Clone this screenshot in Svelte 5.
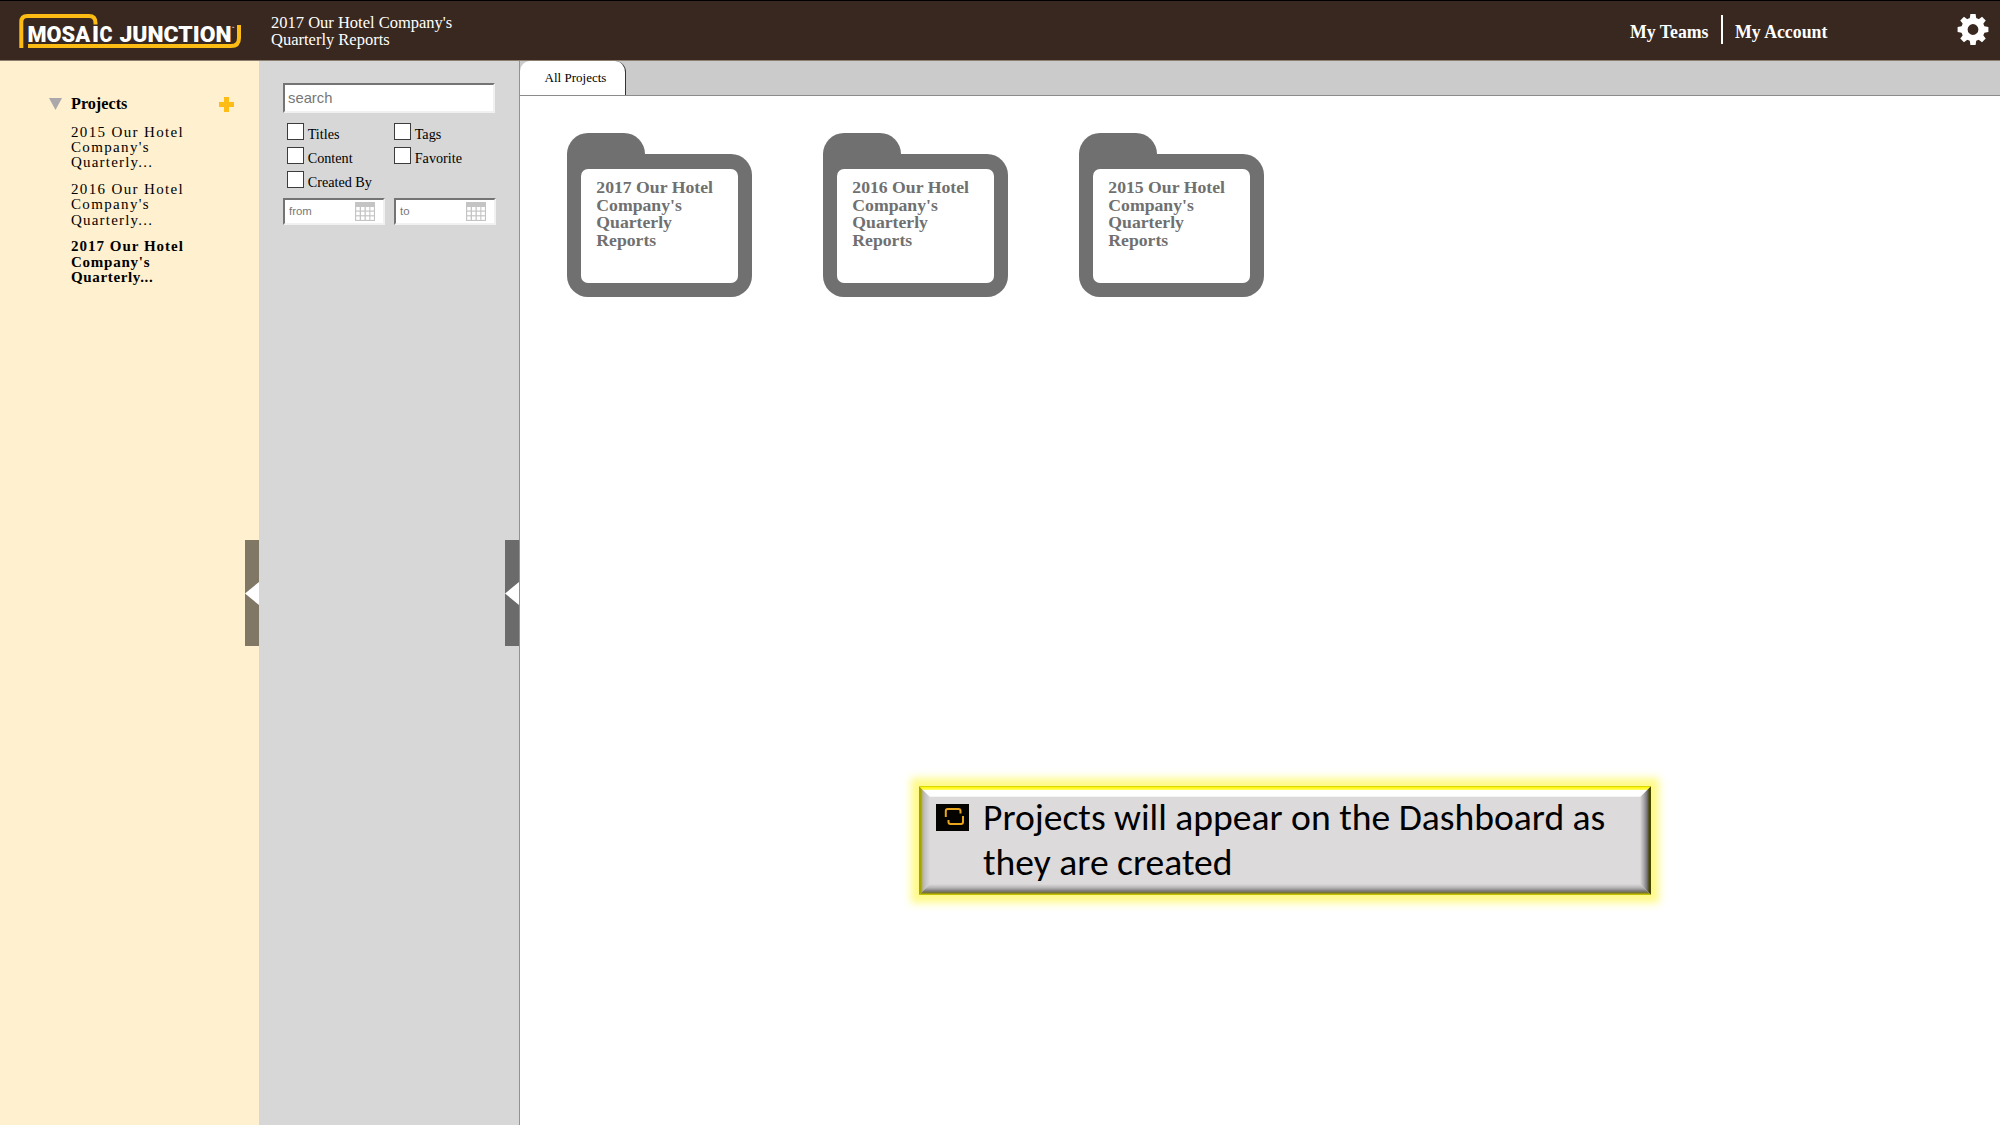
<script>
  const projects = [
    { lines: ['2015 Our Hotel', "Company's", 'Quarterly...'], current: false },
    { lines: ['2016 Our Hotel', "Company's", 'Quarterly...'], current: false },
    { lines: ['2017 Our Hotel', "Company's", 'Quarterly...'], current: true }
  ];
  const filters = ['Titles', 'Tags', 'Content', 'Favorite', 'Created By'];
  const dates = ['from', 'to'];
  const folders = [2017, 2016, 2015];
  const teeth = [0, 45, 90, 135, 180, 225, 270, 315];
</script>

<div class="app">
  <header>
    <svg class="logo" width="224" height="36" viewBox="0 0 224 36">
      <g fill="none" stroke="#fcbc14" stroke-width="4">
        <path d="M2.300 35V9Q2.300 3 8.300 3H70Q76.500 3 76.500 10V11.500" />
        <path d="M9 33H212Q220 33 220 25V12" />
      </g>
      <text x="8.500" y="28.700" textLength="62.500" lengthAdjust="spacingAndGlyphs">MOSA</text>
      <text x="73" y="28.700" textLength="7" lengthAdjust="spacingAndGlyphs">I</text>
      <text x="80.500" y="28.700" textLength="13" lengthAdjust="spacingAndGlyphs">C</text>
      <text x="100.500" y="28.700" textLength="112" lengthAdjust="spacingAndGlyphs">JUNCTION</text>
      <text class="tm" x="212.500" y="16.500">™</text>
    </svg>
    <div class="title">2017 Our Hotel Company's<br />Quarterly Reports</div>
    <nav>
      <a class="teams" href="#teams">My Teams</a>
      <span class="divider"></span>
      <a class="account" href="#account">My Account</a>
    </nav>
    <svg class="gear" width="32" height="32" viewBox="-16 -15.500 32 32">
      <g fill="#fff">
        {#each teeth as angle}
          <path d="M-3.400 -10L-2.600 -15.400H2.600L3.400 -10Z" transform="rotate({angle})" />
        {/each}
      </g>
      <circle r="8.600" fill="none" stroke="#fff" stroke-width="6.400" />
    </svg>
  </header>

  <main>
    <aside class="projects">
      <div class="tree">
        <div class="heading">
          <svg class="caret" width="13" height="12" viewBox="0 0 13 12"><path d="M0 0H13L6.500 12Z" fill="#aaa8ab" /></svg>
          <strong>Projects</strong>
          <svg class="plus" width="15" height="15" viewBox="0 0 15 15"><path d="M5 0H10V5H15V10H10V15H5V10H0V5H5Z" fill="#fdbd16" /></svg>
        </div>
        {#each projects as project}
          <div class="project" class:current={project.current}>
            {#each project.lines as line}<div>{line}</div>{/each}
          </div>
        {/each}
      </div>
      <div class="handle tan">
        <svg width="14" height="23" viewBox="0 0 14 23"><path d="M0 11.500L14 0V23Z" fill="#fff" /></svg>
      </div>
    </aside>

    <aside class="search">
      <div class="form">
        <div class="field query">search</div>
        <div class="checks">
          {#each filters as filter}
            <label><span class="box"></span><span class="name">{filter}</span></label>
          {/each}
        </div>
        <div class="dates">
          {#each dates as date}
            <div class="field date">
              <span>{date}</span>
              <svg width="20" height="19" viewBox="0 0 20 19">
                <path d="M0 0H20V19H0Z" fill="#c4c4c4" />
                <g fill="#fff">
                  {#each [5, 9.7, 14.4] as y}
                    {#each [1.2, 6, 10.8, 15.4] as x}
                      <rect {x} {y} width="3.500" height="3.500" />
                    {/each}
                  {/each}
                </g>
              </svg>
            </div>
          {/each}
        </div>
      </div>
      <div class="handle grey">
        <svg width="14" height="23" viewBox="0 0 14 23"><path d="M0 11.500L14 0V23Z" fill="#fff" /></svg>
      </div>
    </aside>

    <section class="board">
      <div class="tabs"><div class="tab">All Projects</div></div>
      <div class="folders">
        {#each folders as year}
          <div class="folder">
            <div class="ear"></div>
            <div class="body">
              <div class="label">{year} Our Hotel<br />Company's<br />Quarterly<br />Reports</div>
            </div>
          </div>
        {/each}
      </div>
    </section>
  </main>

  <div class="callout">
    <i class="bevel left"></i>
    <i class="bevel right"></i>
    <i class="bevel bottom"></i>
    <i class="bevel top"></i>
    <svg class="bullet" width="33" height="27" viewBox="0 0 33 27">
      <rect width="33" height="27" fill="#050300" />
      <g fill="none" stroke="#e9a51c" stroke-width="2">
        <path d="M9.800 13V7Q9.800 5 11.800 5H22.500Q24.500 5 24.500 7V9.500" />
        <path d="M12.500 16V18Q12.500 20 14.500 20H25Q27 20 27 18V12" />
      </g>
    </svg>
    <div class="message">
      <div>Projects will appear on the Dashboard as</div>
      <div>they are created</div>
    </div>
  </div>
</div>

<style>
  :global(body) { margin: 0; overflow: hidden; }
  .app {
    position: relative;
    width: 2000px;
    height: 1125px;
    display: flex;
    flex-direction: column;
    font-family: 'Liberation Serif', 'Times New Roman', serif;
    color: #000;
    background: #fff;
  }
  header {
    box-sizing: border-box;
    height: 61px;
    border-top: 1px solid #000;
    border-bottom: 1px solid #8d7f70;
    background: #38281f;
    color: #fff;
    display: flex;
    align-items: flex-start;
    padding: 0 11px 0 19px;
  }
  .logo { margin-top: 12px; flex: none; }
  .logo text { font: 900 22px Roboto, sans-serif; fill: #fff; }
  .logo .tm { font-size: 5px; font-weight: 400; }
  .title {
    margin: 13px 0 0 28px;
    font-size: 16.500px;
    line-height: 17px;
    white-space: nowrap;
  }
  nav {
    margin: 14px 129px 0 auto;
    display: flex;
    font-size: 17.800px;
    font-weight: bold;
    line-height: 34px;
    white-space: nowrap;
  }
  nav a { color: inherit; text-decoration: none; }
  .teams { width: 79px; }
  .account { width: 93px; }
  .divider { width: 2px; height: 29px; margin: 0 12px; background: #fff; }
  .gear { flex: none; margin-top: 13px; }
  main { flex: 1; display: flex; min-height: 0; }
  aside { display: flex; align-items: center; box-sizing: border-box; flex: none; }
  .projects { width: 259px; background: #fff0cf; }
  .search { width: 261px; background: #d7d7d7; border-right: 1px solid #929292; }
  .handle { flex: none; height: 106px; display: flex; align-items: center; width: 14px; }
  .handle svg { display: block; }
  .tan { background: #807864; }
  .grey { background: #6b6b6b; }
  .tree { flex: 1; align-self: flex-start; padding: 32px 11px 0 49px; }
  .heading {
    display: flex;
    align-items: center;
    height: 22px;
    font-size: 16.200px;
    line-height: 22px;
    margin-bottom: 9.700px;
  }
  .heading strong { margin-left: 9px; }
  .plus { margin-left: auto; }
  .project {
    padding-left: 22px;
    font-size: 15px;
    line-height: 15.300px;
    letter-spacing: 1.350px;
    margin-bottom: 11.500px;
    white-space: nowrap;
  }
  .project div:last-child { letter-spacing: 1.200px; }
  .current { font-weight: bold; letter-spacing: 1px; }
  .current div:nth-child(2) { letter-spacing: 0.750px; }
  .current div:last-child { letter-spacing: 0.650px; }
  .form { flex: 1; align-self: flex-start; padding: 22px 0 0 24px; }
  .field {
    box-sizing: border-box;
    background: #fff;
    border: 2px solid;
    border-color: #747474 #f1f1f1 #f1f1f1 #747474;
    font-family: 'Liberation Sans', Arial, sans-serif;
    color: #777;
  }
  .query { width: 212px; height: 30px; font-size: 14.800px; line-height: 26px; padding-left: 3px; }
  .checks {
    display: grid;
    grid-template-columns: 107px 100px;
    grid-auto-rows: 24px;
    padding: 10px 0 0 4px;
    font-size: 14.200px;
  }
  .checks label { display: flex; }
  .box { box-sizing: border-box; width: 17px; height: 17px; border: 1px solid #3c3c3c; background: #fff; }
  .name { margin-left: 3.700px; line-height: 22.500px; white-space: nowrap; }
  .dates { display: flex; gap: 9px; margin-top: 3px; }
  .date {
    width: 102px;
    height: 27px;
    display: flex;
    justify-content: space-between;
    align-items: center;
    padding: 0 8px 1px 4px;
    font-size: 11.400px;
  }
  .board { flex: 1; display: flex; flex-direction: column; }
  .tabs { height: 34px; background: #cbcbcb; border-bottom: 1px solid #8c8c8c; }
  .tab {
    box-sizing: border-box;
    width: 106px;
    height: 34px;
    padding-left: 24.600px;
    background: #fff;
    border-right: 1px solid #333;
    border-radius: 10px 11px 0 0;
    font-size: 13px;
    line-height: 34px;
    white-space: nowrap;
  }
  .folders { display: flex; gap: 71px; padding: 37px 0 0 47px; }
  .folder { width: 185px; }
  .ear { width: 78px; height: 41px; margin-bottom: -20px; background: #707070; border-radius: 21px 21px 0 0; }
  .body {
    box-sizing: border-box;
    height: 143px;
    padding: 14.500px 14px 14px;
    background: #707070;
    border-radius: 0 21px 21px 21px;
  }
  .label {
    box-sizing: border-box;
    height: 114.500px;
    padding: 10.500px 0 0 15.300px;
    border-radius: 7px;
    background: #fff;
    color: #707070;
    font-size: 17.700px;
    font-weight: bold;
    line-height: 17.700px;
    white-space: nowrap;
  }
  .callout {
    position: absolute;
    left: 919px;
    top: 786px;
    box-sizing: border-box;
    width: 732px;
    height: 109px;
    display: flex;
    padding: 18px 0 0 17px;
    background: #dddadb;
    box-shadow: 0 0 8px 8px #fffa88;
  }
  .bevel { position: absolute; }
  .top {
    left: 0; right: 0; top: 0; height: 11px;
    background: linear-gradient(#d8d800 0 1px, #fff200 1px, #ffff5c 3.500px, #fff 4.500px 10px, #eeecec);
    clip-path: polygon(0 0, 100% 0, calc(100% - 11px) 100%, 11px 100%);
  }
  .bottom {
    left: 0; right: 0; bottom: 0; height: 11px;
    background: linear-gradient(#dddadb, #b5b2b3 4px, #7c797b 7px, #77743f 8.500px, #a9a500 10px, #dcd800);
    clip-path: polygon(11px 0, calc(100% - 11px) 0, 100% 100%, 0 100%);
  }
  .left {
    left: 0; top: 0; bottom: 0; width: 11px;
    background: linear-gradient(90deg, #a5a300 0 2px, #b2b04a 3px, #b6b3b4 4px, #c9c6c7 7px, #dddadb);
    clip-path: polygon(0 0, 100% 11px, 100% calc(100% - 11px), 0 100%);
  }
  .right {
    right: 0; top: 0; bottom: 0; width: 11px;
    background: linear-gradient(90deg, #dddadb, #a9a6a8 4px, #77747a 7px, #57552c 8.500px, #3c3a00 10px, #5c5a00);
    clip-path: polygon(100% 0, 100% 100%, 0 calc(100% - 11px), 0 11px);
  }
  .bullet { flex: none; }
  .message {
    margin: -9px 0 0 14px;
    font-family: Carlito, Calibri, Lato, sans-serif;
    font-size: 37.600px;
    line-height: 45px;
    white-space: nowrap;
  }
</style>
